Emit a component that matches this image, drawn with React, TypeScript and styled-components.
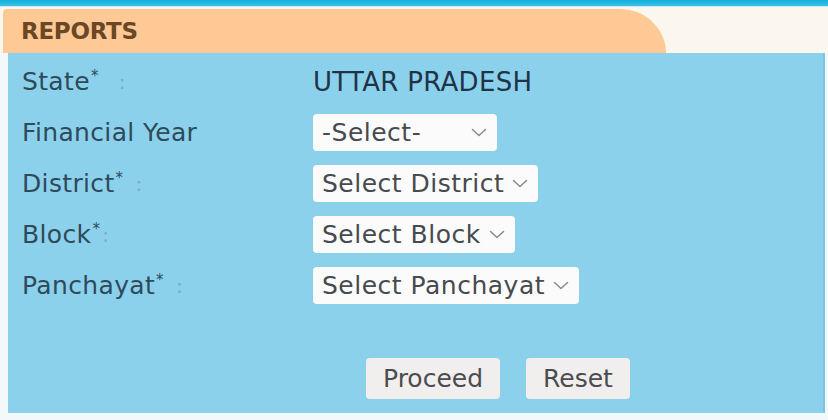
import React from 'react'
import styled, { createGlobalStyle } from 'styled-components'

const GlobalStyle = createGlobalStyle`
  html, body {
    margin: 0;
    padding: 0;
    background: #f3f9fb;
  }
  body {
    font-family: 'DejaVu Sans', 'Liberation Sans', sans-serif;
  }
`

const Page = styled.div`
  width: 828px;
  height: 420px;
  overflow: hidden;
  background: #f3f9fb;
  display: flex;
  flex-direction: column;
`
const TopBar = styled.div`
  height: 6px;
  background: linear-gradient(#10b0de, #3cc2e8);
  border-bottom: 1px solid #c8ecf6;
`
const TabStrip = styled.div`
  background: #fbf7ef;
  padding: 2px 0 0 3px;
  display: flex;
`
const Tab = styled.div`
  width: 663px;
  height: 44px;
  box-sizing: border-box;
  background: #fec994;
  border-radius: 4px 46px 0 0 / 4px 44px 0 0;
  padding: 0 0 0 18px;
  display: flex;
  align-items: center;
`
const TabTitle = styled.h1`
  margin: 0;
  font-size: 23px;
  font-weight: 700;
  color: #6c4726;
  letter-spacing: -0.3px;
`
const Panel = styled.div`
  margin: 0 3px 0 8px;
  height: 360px;
  box-sizing: border-box;
  background: #8cd1ec;
  border-right: 2px solid #7cc4e0;
  padding: 10px 14px 0;
  display: flex;
  flex-direction: column;
`
const FormGrid = styled.div`
  display: grid;
  grid-template-columns: 291px auto;
  grid-auto-rows: 37px;
  row-gap: 14px;
  align-items: center;
  justify-items: start;
`
const Label = styled.div`
  font-size: 25px;
  letter-spacing: 0.35px;
  color: #2f4a5a;
  display: flex;
  align-items: center;
  white-space: nowrap;
`
const Star = styled.sup`
  font-size: 15px;
  line-height: 1;
  margin-left: 1px;
  align-self: flex-start;
  margin-top: 2px;
`
const Colon = styled.span<{ $gap: number }>`
  color: #78aec4;
  margin-left: ${p => p.$gap}px;
  font-size: 20px;
`
const Value = styled.div`
  font-size: 26px;
  color: #1f3446;
  letter-spacing: 0.3px;
`
const SelectBox = styled.div<{ $width?: number }>`
  height: 37px;
  box-sizing: border-box;
  ${p => (p.$width ? `width: ${p.$width}px;` : '')}
  background: #fbfbfb;
  border-radius: 4px;
  padding: 0 10px 0 9px;
  display: flex;
  align-items: center;
  justify-content: space-between;
  gap: 8px;
  font-size: 25px;
  letter-spacing: 0.5px;
  color: #474a4e;
  white-space: nowrap;
`
const ButtonRow = styled.div`
  margin: 54px 0 0 344px;
  display: flex;
  gap: 26px;
`
const Button = styled.button`
  height: 41px;
  box-sizing: border-box;
  border: none;
  border-radius: 4px;
  background: #f1eeee;
  color: #4b4c50;
  font-family: 'DejaVu Sans', 'Liberation Sans', sans-serif;
  font-size: 25px;
  padding: 0 17px;
`
const Chevron = () => (
  <svg width="16" height="9" viewBox="0 0 16 9" fill="none">
    <polyline points="1.5,1.5 8,7.5 14.5,1.5" stroke="#8a8d92" strokeWidth="1.6" strokeLinecap="round" strokeLinejoin="round" />
  </svg>
)

const selects = [
  { label: 'Financial Year', required: false, gap: 0, text: '-Select-', width: 184 },
  { label: 'District', required: true, gap: 12, text: 'Select District' },
  { label: 'Block', required: true, gap: 2, text: 'Select Block' },
  { label: 'Panchayat', required: true, gap: 12, text: 'Select Panchayat' },
]

export default function App() {
  return (
    <Page>
      <GlobalStyle />
      <TopBar />
      <TabStrip>
        <Tab>
          <TabTitle>REPORTS</TabTitle>
        </Tab>
      </TabStrip>
      <Panel>
        <FormGrid>
          <Label>
            State<Star>*</Star>
            <Colon $gap={20}>:</Colon>
          </Label>
          <Value>UTTAR PRADESH</Value>
          {selects.map(s => (
            <React.Fragment key={s.label}>
              <Label>
                {s.label}
                {s.required && <Star>*</Star>}
                {s.required && <Colon $gap={s.gap}>:</Colon>}
              </Label>
              <SelectBox $width={s.width}>
                <span>{s.text}</span>
                <Chevron />
              </SelectBox>
            </React.Fragment>
          ))}
        </FormGrid>
        <ButtonRow>
          <Button>Proceed</Button>
          <Button>Reset</Button>
        </ButtonRow>
      </Panel>
    </Page>
  )
}
